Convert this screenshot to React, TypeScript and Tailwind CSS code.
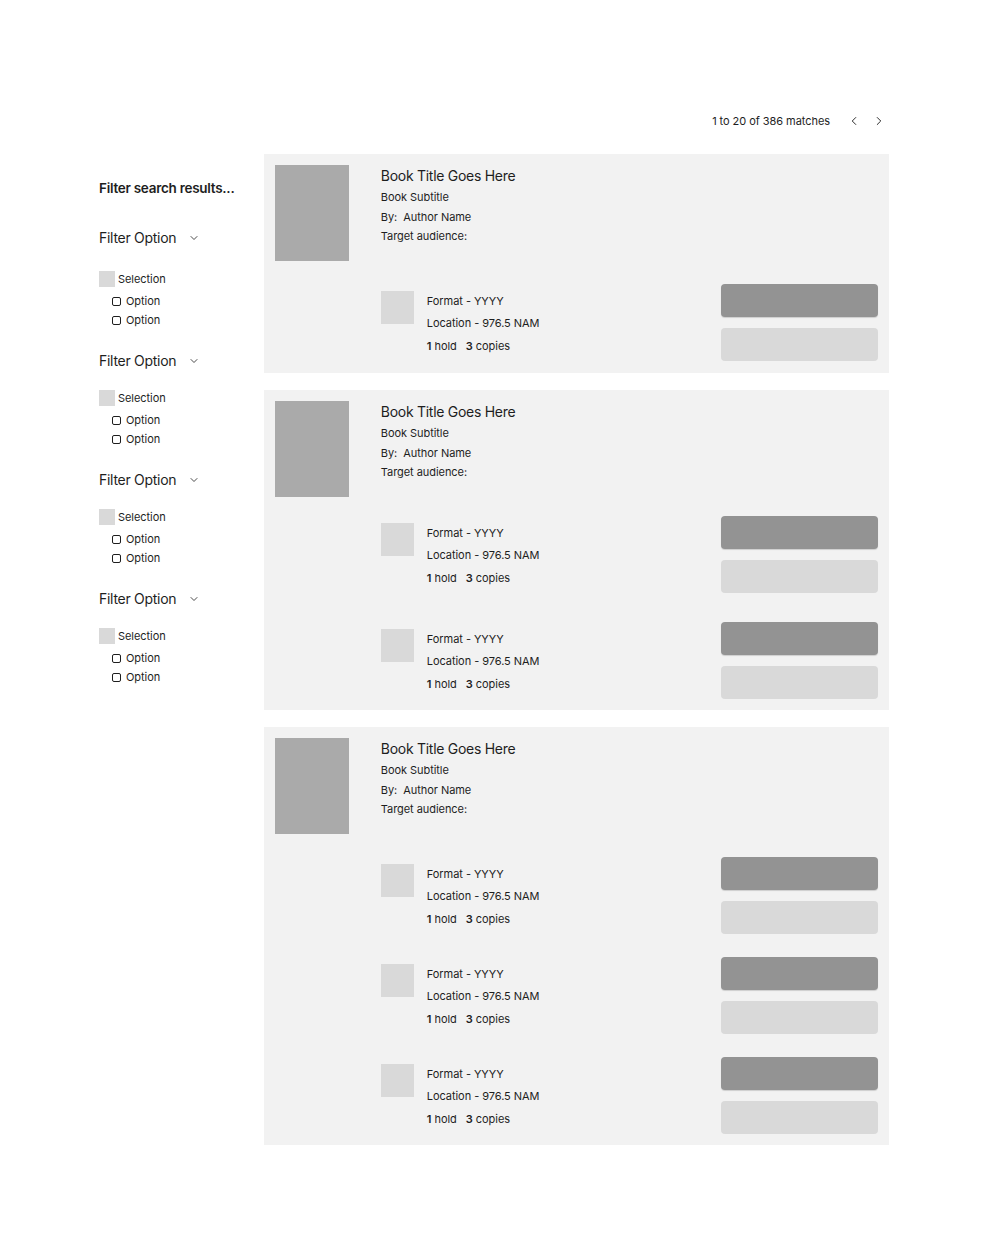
import { ChevronDown, ChevronLeft, ChevronRight } from 'lucide-react';

type Card = { items: number; gap: string; top: string; pb: string };

const cards: Card[] = [
  { items: 1, gap: 'gap-[29px]', top: 'mt-[23px]', pb: 'pb-[12px]' },
  { items: 2, gap: 'gap-[29px]', top: 'mt-[19px]', pb: 'pb-[11px]' },
  { items: 3, gap: 'gap-[23px]', top: 'mt-[23px]', pb: 'pb-[11px]' },
];

const body = 'text-[11px] tracking-[-0.005em]';

function FilterGroup({ first }: { first?: boolean }) {
  return (
    <div className={first ? 'mt-[29px]' : 'mt-[22px]'}>
      <div className="flex items-center h-[20px] text-[14px] tracking-[-0.02em]">
        Filter Option
        <ChevronDown size={12} strokeWidth={1.6} className="ml-[12px] mt-[1px]" />
      </div>
      <div className={`${first ? 'mt-[24px]' : 'mt-[20px]'} flex items-center h-[16px]`}>
        <div className="w-[16px] h-[16px] bg-[#d9d9d9]" />
        <span className={`ml-[3px] ${body}`}>Selection</span>
      </div>
      {[0, 1].map((i) => (
        <div key={i} className={`flex items-center pl-[13px] h-[16px] ${i === 0 ? 'mt-[6px]' : 'mt-[3px]'}`}>
          <div className="w-[9px] h-[9px] border border-[#1e1e1e] rounded-[2px]" />
          <span className={`ml-[5px] ${body}`}>Option</span>
        </div>
      ))}
    </div>
  );
}

function Holding() {
  return (
    <div className="flex items-center">
      <div className="w-[106px]" />
      <div className="flex items-start flex-1">
        <div className="w-[33px] h-[33px] bg-[#d9d9d9] mt-[3px]" />
        <div className={`ml-[13px] ${body} leading-[22.5px] pt-[2px]`}>
          <div>Format - YYYY</div>
          <div>Location - 976.5 NAM</div>
          <div>
            <b className="font-semibold">1</b> hold&nbsp;&nbsp;&nbsp;<b className="font-semibold">3</b> copies
          </div>
        </div>
      </div>
      <div className="flex flex-col gap-[11px] w-[157px]">
        <div className="h-[33px] rounded-[4px] bg-[#939393] shadow-[0_1px_1px_rgba(0,0,0,0.15)]" />
        <div className="h-[33px] rounded-[4px] bg-[#d9d9d9]" />
      </div>
    </div>
  );
}

function BookCard({ card }: { card: Card }) {
  return (
    <div className={`bg-[#f2f2f2] px-[11px] pt-[11px] ${card.pb}`}>
      <div className="flex">
        <div className="w-[74px] h-[96px] bg-[#aaaaaa]" />
        <div className="ml-[32px] pt-[1px]">
          <div className="text-[14px] tracking-[-0.02em] leading-[20px]">Book Title Goes Here</div>
          <div className={`${body} leading-[19.5px] mt-[2px]`}>Book Subtitle</div>
          <div className={`${body} leading-[19.5px]`}>By:&nbsp; Author Name</div>
          <div className={`${body} leading-[19.5px]`}>Target audience:</div>
        </div>
      </div>
      <div className={`${card.top} flex flex-col ${card.gap}`}>
        {Array.from({ length: card.items }).map((_, i) => (
          <Holding key={i} />
        ))}
      </div>
    </div>
  );
}

export default function App() {
  return (
    <div className="min-h-[1239px] bg-white text-[#1e1e1e]" style={{ fontFamily: 'Inter, "Noto Sans", sans-serif' }}>
      <div className="pt-[111px] pl-[99px] pr-[111px]">
        <div className={`flex justify-end items-center h-[20px] ${body}`}>
          <span>1 to 20 of 386 matches</span>
          <ChevronLeft size={14} strokeWidth={1.6} className="ml-[17px]" />
          <ChevronRight size={14} strokeWidth={1.6} className="ml-[11px] mr-[3px]" />
        </div>
        <div className="flex mt-[23px]">
          <aside className="w-[165px] pt-[24px]">
            <div className="text-[13.5px] tracking-[-0.02em] font-semibold h-[20px] leading-[20px]">Filter search results...</div>
            {[0, 1, 2, 3].map((i) => (
              <FilterGroup key={i} first={i === 0} />
            ))}
          </aside>
          <main className="w-[626px] flex flex-col gap-[17px]">
            {cards.map((c, i) => (
              <BookCard key={i} card={c} />
            ))}
          </main>
        </div>
      </div>
    </div>
  );
}
